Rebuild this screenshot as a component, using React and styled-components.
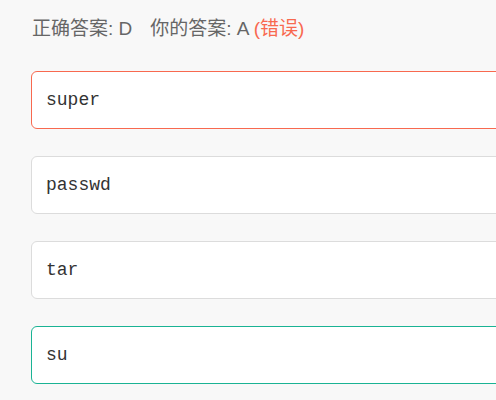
import styled, { createGlobalStyle } from "styled-components";

const GlobalStyle = createGlobalStyle`
  html, body {
    margin: 0;
    padding: 0;
    background: #f8f8f8;
    overflow: hidden;
  }
`;

const options = [
  { text: "super", state: "wrong" },
  { text: "passwd", state: "normal" },
  { text: "tar", state: "normal" },
  { text: "su", state: "right" },
];

const borderColors = {
  wrong: "#f8694f",
  right: "#1ab394",
  normal: "#dcdcdc",
};

const App = () => {
  return (
    <>
      <GlobalStyle />
      <Page>
        <Result>
          <Answer>正确答案: D</Answer>
          <Answer>
            你的答案: A <Wrong>(错误)</Wrong>
          </Answer>
        </Result>
        <OptionList>
          {options.map((o) => (
            <Option key={o.text} $state={o.state}>
              {o.text}
            </Option>
          ))}
        </OptionList>
      </Page>
    </>
  );
};

const Page = styled.div`
  padding: 17px 0 0 31px;
  width: 520px;
`;

const Result = styled.div`
  display: flex;
  gap: 18px;
  padding-left: 1px;
  font-family: "Liberation Sans", "Noto Sans CJK SC", sans-serif;
  font-size: 19px;
  line-height: 24px;
  color: #666;
`;

const Answer = styled.span``;

const Wrong = styled.span`
  color: #f8694f;
`;

const OptionList = styled.div`
  margin-top: 30px;
  display: flex;
  flex-direction: column;
  gap: 27px;
`;

const Option = styled.div`
  box-sizing: border-box;
  height: 58px;
  display: flex;
  align-items: center;
  padding-left: 14px;
  background: #fff;
  border: 1px solid ${({ $state }) => borderColors[$state]};
  border-radius: 6px;
  font-family: "Liberation Mono", monospace;
  font-size: 18px;
  color: #333;
`;

export default App;
